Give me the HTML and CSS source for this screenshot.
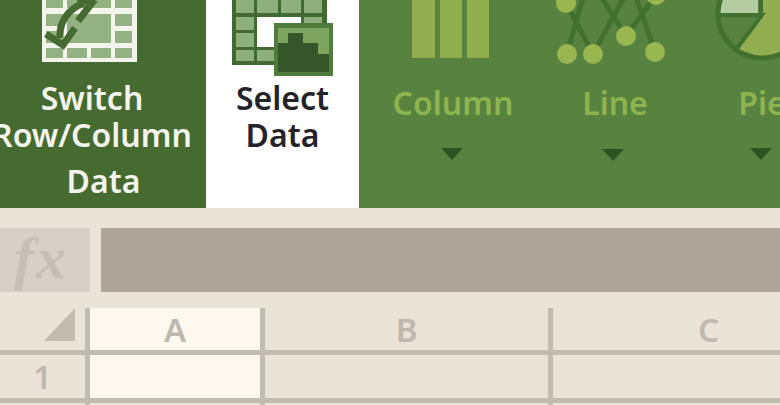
FILE: index.html
```html
<!DOCTYPE html>
<html lang="en">
<head>
    <title>Chart Design Ribbon</title>
    <link rel="stylesheet" href="styles.css">
</head>
<body>

    <div class="ribbon">
        <div class="ribbon-group group-switch">
            <svg class="ribbon-icon" viewBox="0 0 206 79">
                <rect x="42" y="-5" width="95" height="67" fill="#f3f4ec"/>
                <g fill="#94b184">
                    <rect x="46" y="-5" width="17" height="13"/>
                    <rect x="67" y="-5" width="44" height="13"/>
                    <rect x="115" y="-5" width="17" height="13"/>
                    <rect x="46" y="14" width="17" height="12"/>
                    <rect x="46" y="31" width="17" height="12"/>
                    <rect x="67" y="14" width="44" height="29"/>
                    <rect x="115" y="14" width="17" height="12"/>
                    <rect x="115" y="31" width="17" height="12"/>
                    <rect x="46" y="48" width="17" height="10"/>
                    <rect x="67" y="48" width="20" height="10"/>
                    <rect x="91" y="48" width="20" height="10"/>
                    <rect x="115" y="48" width="17" height="10"/>
                </g>
                <g fill="none" stroke="#466b31" stroke-width="7">
                    <path d="M60 38 C59 22 68 9 84 3"/>
                    <path d="M46 34 L63 45 L75 28"/>
                    <path d="M78 21 L92 3 L78 -2"/>
                </g>
            </svg>
            <div class="ribbon-label label-light shift-left">Switch</div>
            <div class="ribbon-label label-light shift-left">Row/Column</div>
            <div class="ribbon-label label-light shift-right">Data</div>
        </div>

        <div class="ribbon-group group-select">
            <svg class="ribbon-icon" viewBox="206 0 153 79">
                <rect x="232" y="-5" width="95" height="70" fill="#3f6a30"/>
                <g fill="#8fae7e">
                    <rect x="236" y="-5" width="18" height="18"/>
                    <rect x="257" y="-5" width="21" height="18"/>
                    <rect x="281" y="-5" width="20" height="18"/>
                    <rect x="304" y="-5" width="18" height="18"/>
                    <rect x="236" y="17" width="18" height="13"/>
                    <rect x="304" y="17" width="18" height="13"/>
                    <rect x="236" y="33" width="18" height="14"/>
                    <rect x="236" y="50" width="18" height="11"/>
                    <rect x="257" y="50" width="21" height="11"/>
                </g>
                <rect x="257" y="17" width="44" height="30" fill="#fff"/>
                <rect x="274" y="23" width="59" height="53" fill="#4d7c3d"/>
                <rect x="278" y="28" width="51" height="44" fill="#7ea55f"/>
                <polygon points="278,43 288,43 288,33 303,33 303,43 318,43 318,54 329,54 329,72 278,72" fill="#34562a"/>
            </svg>
            <div class="ribbon-label label-dark">Select</div>
            <div class="ribbon-label label-dark">Data</div>
        </div>

        <div class="ribbon-group group-charts">
            <div class="chart-item">
                <svg class="ribbon-icon" viewBox="359 0 188 79">
                    <g fill="#93ae4f">
                        <rect x="412" y="-5" width="23" height="63"/>
                        <rect x="440" y="-5" width="22" height="63"/>
                        <rect x="467" y="-5" width="22" height="63"/>
                    </g>
                </svg>
                <div class="chart-label">Column</div>
                <div class="arrow"></div>
            </div>
            <div class="chart-item">
                <svg class="ribbon-icon" viewBox="547 0 136 79">
                    <g stroke="#41702f" stroke-width="5">
                        <line x1="567" y1="54" x2="583" y2="-3"/>
                        <line x1="566" y1="3" x2="593" y2="54"/>
                        <line x1="593" y1="54" x2="624" y2="-3"/>
                        <line x1="601" y1="-3" x2="626" y2="36"/>
                        <line x1="626" y1="36" x2="656" y2="-5"/>
                        <line x1="636" y1="-3" x2="655" y2="52"/>
                    </g>
                    <g fill="#9ab651">
                        <circle cx="566" cy="3" r="10"/>
                        <circle cx="567" cy="54" r="10"/>
                        <circle cx="593" cy="54" r="10"/>
                        <circle cx="626" cy="36" r="10"/>
                        <circle cx="655" cy="52" r="10"/>
                        <circle cx="656" cy="-5" r="10"/>
                    </g>
                </svg>
                <div class="chart-label">Line</div>
                <div class="arrow arrow-line"></div>
            </div>
            <div class="chart-item">
                <svg class="ribbon-icon" viewBox="683 0 158 79">
                    <path d="M762 15 L736 49 A44 44 0 0 0 806 15 L806 -30 L762 -30 Z" fill="#93ae4f"/>
                    <path d="M720 13 L758 13 L758 -30 L720 -30 Z" fill="#b5cca3"/>
                    <circle cx="762" cy="14" r="44" fill="none" stroke="#41702f" stroke-width="5"/>
                    <path d="M718 15 L762 15 L735 51" fill="none" stroke="#41702f" stroke-width="4"/>
                    <line x1="761" y1="-5" x2="761" y2="15" stroke="#41702f" stroke-width="4"/>
                </svg>
                <div class="chart-label">Pie</div>
                <div class="arrow"></div>
            </div>
        </div>
    </div>

    <div class="formula-bar">
        <div class="fx-box">fx</div>
        <div class="formula-input"></div>
    </div>

    <div class="sheet">
        <div class="cell"><div class="corner"></div></div>
        <div class="cell cell-active">A</div>
        <div class="cell">B</div>
        <div class="cell">C</div>

        <div class="cell">1</div>
        <div class="cell cell-active"></div>
        <div class="cell"></div>
        <div class="cell"></div>

        <div class="cell"></div>
        <div class="cell"></div>
        <div class="cell"></div>
        <div class="cell"></div>
    </div>

</body>
</html>
```

FILE: styles.css
```css
html, body {
    height: 405px;
    overflow: hidden;
}

body {
    margin: 0;
    width: 780px;
    background: #eae4d8;
    font-family: 'Noto Sans', 'Open Sans', sans-serif;
}

.ribbon {
    display: flex;
    height: 208px;
    overflow: hidden;
}

.ribbon-group {
    display: flex;
    flex: none;
    flex-direction: column;
    align-items: center;
}

.group-switch {
    width: 206px;
    overflow: hidden;
    background: #466b31;
}

.group-select {
    width: 153px;
    background: #fff;
}

.group-charts {
    flex-direction: row;
    align-items: flex-start;
    width: 421px;
    overflow: hidden;
    background: #588240;
}

.ribbon-icon {
    display: block;
    width: 100%;
    height: 79px;
    flex: none;
}

.ribbon-label {
    font-size: 32px;
    font-weight: 600;
    line-height: 37px;
    white-space: nowrap;
}

.label-light {
    color: #f3f4ec;
}

.label-dark {
    color: #25232a;
}

.shift-left {
    margin-right: 22px;
}

.shift-right {
    margin-left: 1px;
    margin-top: 9px;
}

.chart-item {
    display: flex;
    flex-direction: column;
    align-items: center;
    flex: none;
    width: 188px;
}

.chart-item:nth-child(2) {
    width: 136px;
}

.chart-item:nth-child(3) {
    width: 158px;
}

.chart-label {
    margin-top: 5px;
    font-size: 32px;
    font-weight: 600;
    line-height: 37px;
    color: #8fb34f;
}

.arrow {
    width: 22px;
    height: 12px;
    margin-top: 27px;
    margin-right: 2px;
    background: #2f5222;
    clip-path: polygon(0 0, 100% 0, 50% 100%);
}

.arrow-line {
    margin-top: 28px;
    margin-right: 4px;
}

.formula-bar {
    display: flex;
    gap: 11px;
    height: 64px;
    margin-top: 20px;
}

.fx-box {
    box-sizing: border-box;
    width: 90px;
    padding-right: 8px;
    background: #d6d0c6;
    color: #c6bfb4;
    font-family: 'Liberation Serif', serif;
    font-style: italic;
    font-weight: bold;
    font-size: 60px;
    letter-spacing: 2px;
    line-height: 60px;
    text-align: center;
}

.formula-input {
    flex: 1;
    background: #aca598;
}

.sheet {
    display: grid;
    grid-template-columns: 90px 175px 288px 227px;
    grid-template-rows: 47px 48px 48px;
    height: 97px;
    overflow: hidden;
    margin-top: 16px;
}

.cell {
    box-sizing: border-box;
    display: flex;
    align-items: center;
    justify-content: center;
    border-right: 5px solid #c2bbb0;
    border-bottom: 5px solid #c2bbb0;
    font-size: 33px;
    font-weight: 600;
    color: #bfb8ac;
}

.cell:nth-child(4n) {
    justify-content: flex-start;
    padding-left: 145px;
    border-right: none;
}

.cell-active {
    background: #fdf9ee;
}

.corner {
    width: 31px;
    height: 33px;
    margin: 0 10px 9px auto;
    align-self: flex-end;
    background: #c2bbb0;
    clip-path: polygon(100% 0, 100% 100%, 0 100%);
}
```
